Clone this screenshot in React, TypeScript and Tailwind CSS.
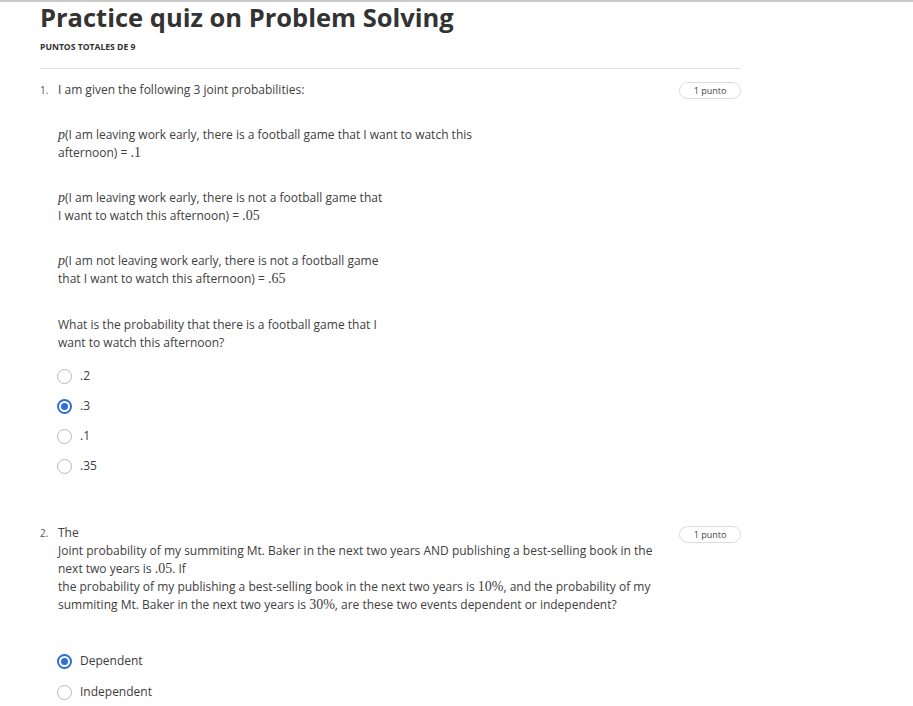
import React from "react";

const M = ({ children }: { children: React.ReactNode }) => (
  <span className="font-['Liberation_Serif',serif] text-[14px] leading-[12px]">{children}</span>
);
const P = () => <span className="font-['Liberation_Serif',serif] italic text-[14px] leading-[12px]">p</span>;

function Radio({ checked, label }: { checked?: boolean; label: string }) {
  return (
    <div className="flex items-center h-[30px]">
      {checked ? (
        <span className="w-[15px] h-[15px] rounded-full border-2 border-[#2d6fd6] flex items-center justify-center -ml-px">
          <span className="w-[7px] h-[7px] rounded-full bg-[#2d6fd6]" />
        </span>
      ) : (
        <span className="w-[15px] h-[15px] rounded-full border-[1.5px] border-[#b9b9b9] -ml-px" />
      )}
      <span className="ml-[8px] text-[12px] leading-[18px] text-[#3c3c3c]">{label}</span>
    </div>
  );
}

function Badge() {
  return (
    <div className="w-[62px] h-[17px] rounded-full border border-[#dcdcdc] flex items-center justify-center text-[9px] text-[#444] shrink-0">
      1 punto
    </div>
  );
}

export default function App() {
  return (
    <div className="w-[913px] h-[706px] bg-white overflow-hidden font-['Open_Sans',sans-serif] text-[#404040]">
      <div className="h-[2px] bg-[#c9c9c9]" />
      <div className="pl-[40px] w-[741px]">
        <h1 className="text-[25.5px] leading-[31px] font-bold text-[#333]">Practice quiz on Problem Solving</h1>
        <div className="mt-[8px] text-[8.6px] leading-[12px] font-bold text-[#333] uppercase">Puntos totales de 9</div>
        <div className="mt-[15px] h-px bg-[#e2e2e2]" />

        {/* Question 1 */}
        <div className="mt-[12px] flex">
          <div className="w-[18px] text-[10px] leading-[18px] text-[#555]">1.</div>
          <div className="flex-1 text-[12px] leading-[18px]">
            <div>I am given the following 3 joint probabilities:</div>
            <div className="mt-[27px]">
              <P />(I am leaving work early, there is a football game that I want to watch this
              <br />
              afternoon) = <M>.1</M>
            </div>
            <div className="mt-[27px]">
              <P />(I am leaving work early, there is not a football game that
              <br />I want to watch this afternoon) = <M>.05</M>
            </div>
            <div className="mt-[27px]">
              <P />(I am not leaving work early, there is not a football game
              <br />
              that I want to watch this afternoon) = <M>.65</M>
            </div>
            <div className="mt-[28px]">
              What is the probability that there is a football game that I
              <br />
              want to watch this afternoon?
            </div>
            <div className="mt-[9px]">
              <Radio label=".2" />
              <Radio checked label=".3" />
              <Radio label=".1" />
              <Radio label=".35" />
            </div>
          </div>
          <div className="pt-[1px]">
            <Badge />
          </div>
        </div>

        {/* Question 2 */}
        <div className="mt-[43px] flex">
          <div className="w-[18px] text-[10px] leading-[18px] text-[#555]">2.</div>
          <div className="flex-1 text-[12px] leading-[18px] pr-[18px]">
            <div>
              The
              <br />
              Joint probability of my summiting Mt. Baker in the next two years AND publishing a best-selling book in the
              next two years is <M>.05</M>. If
              <br />
              the probability of my publishing a best-selling book in the next two years is <M>10%</M>, and the probability of
              my summiting Mt. Baker in the next two years is <M>30%</M>, are these two events dependent or independent?
            </div>
            <div className="mt-[32px]">
              <Radio checked label="Dependent" />
              <div className="h-px" />
              <Radio label="Independent" />
            </div>
          </div>
          <div className="pt-[2px]">
            <Badge />
          </div>
        </div>
      </div>
    </div>
  );
}
